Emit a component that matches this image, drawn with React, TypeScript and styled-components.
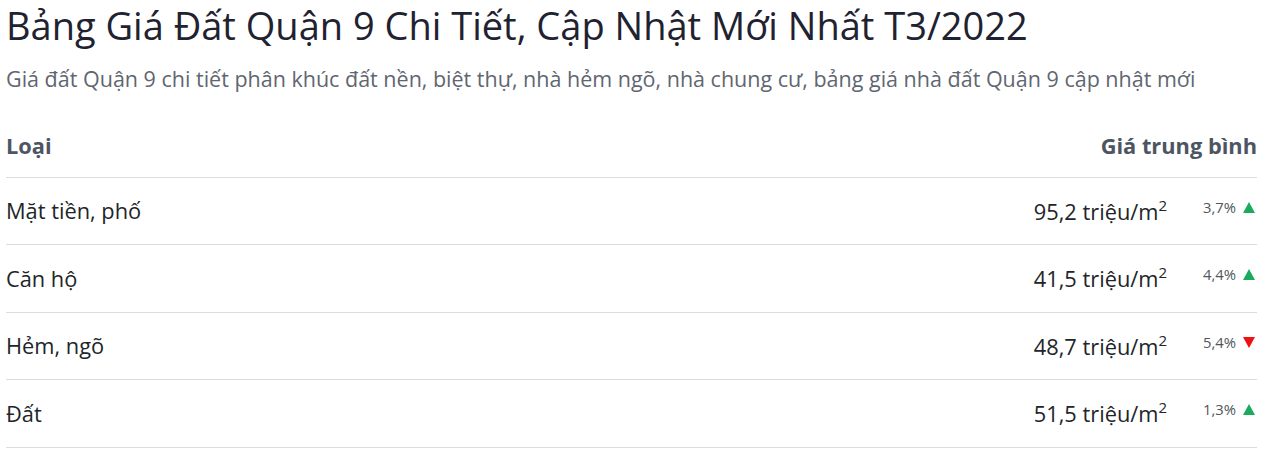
import React from "react";
import styled, { createGlobalStyle } from "styled-components";

const Global = createGlobalStyle`
  html, body { margin: 0; padding: 0; background: #fff; }
  body { font-family: "Open Sans", "Noto Sans", sans-serif; color: #212529; }
`;

const Page = styled.div`
  padding: 0 7px 0 6px;
`;

const Title = styled.h1`
  margin: 0;
  padding-top: 2px;
  font-size: 38px;
  font-weight: 400;
  line-height: 46px;
  color: #1f2230;
  white-space: nowrap;
`;

const Subtitle = styled.p`
  margin: 16px 0 0;
  font-size: 21.5px;
  line-height: 30px;
  color: #5f6670;
  white-space: nowrap;
`;

const Table = styled.div`
  display: flex;
  flex-direction: column;
  margin-top: 16px;
`;

const Row = styled.div<{ $head?: boolean }>`
  display: flex;
  align-items: center;
  height: ${(p) => (p.$head ? "62.5px" : "66.5px")};
  padding-top: ${(p) => (p.$head ? "4px" : "0")};
  border-bottom: 1px solid #dcdcdc;
  font-size: 21.8px;
  color: ${(p) => (p.$head ? "#4d5562" : "#212529")};
  font-weight: ${(p) => (p.$head ? 700 : 400)};
`;

const Name = styled.div`
  flex: 1;
`;

const Price = styled.div`
  text-align: right;
  sup { font-size: 15px; position: relative; top: -1px; }
`;

const Change = styled.div`
  box-sizing: border-box;
  width: 90px;
  align-self: flex-start;
  margin-top: 19px;
  padding-right: 2px;
  display: flex;
  justify-content: flex-end;
  align-items: center;
  gap: 7px;
  font-size: 14.8px;
  color: #50555c;
`;

const Tri = styled.span<{ $up: boolean }>`
  width: 0;
  height: 0;
  border-left: 6px solid transparent;
  border-right: 6px solid transparent;
  ${(p) =>
    p.$up
      ? "border-bottom: 11px solid #1aab5c; margin-top: 1px;"
      : "border-top: 11px solid #ee1111; margin-top: 1px;"}
`;

const rows = [
  { name: "Mặt tiền, phố", price: "95,2", pct: "3,7%", up: true },
  { name: "Căn hộ", price: "41,5", pct: "4,4%", up: true },
  { name: "Hẻm, ngõ", price: "48,7", pct: "5,4%", up: false },
  { name: "Đất", price: "51,5", pct: "1,3%", up: true },
];

export default function App() {
  return (
    <>
      <Global />
      <Page>
        <Title>Bảng Giá Đất Quận 9 Chi Tiết, Cập Nhật Mới Nhất T3/2022</Title>
        <Subtitle>
          Giá đất Quận 9 chi tiết phân khúc đất nền, biệt thự, nhà hẻm ngõ, nhà chung cư, bảng giá nhà đất Quận 9 cập nhật mới
        </Subtitle>
        <Table>
          <Row $head>
            <Name>Loại</Name>
            <Price>Giá trung bình</Price>
          </Row>
          {rows.map((r) => (
            <Row key={r.name}>
              <Name>{r.name}</Name>
              <Price>
                {r.price} triệu/m<sup>2</sup>
              </Price>
              <Change>
                {r.pct}
                <Tri $up={r.up} />
              </Change>
            </Row>
          ))}
        </Table>
      </Page>
    </>
  );
}
